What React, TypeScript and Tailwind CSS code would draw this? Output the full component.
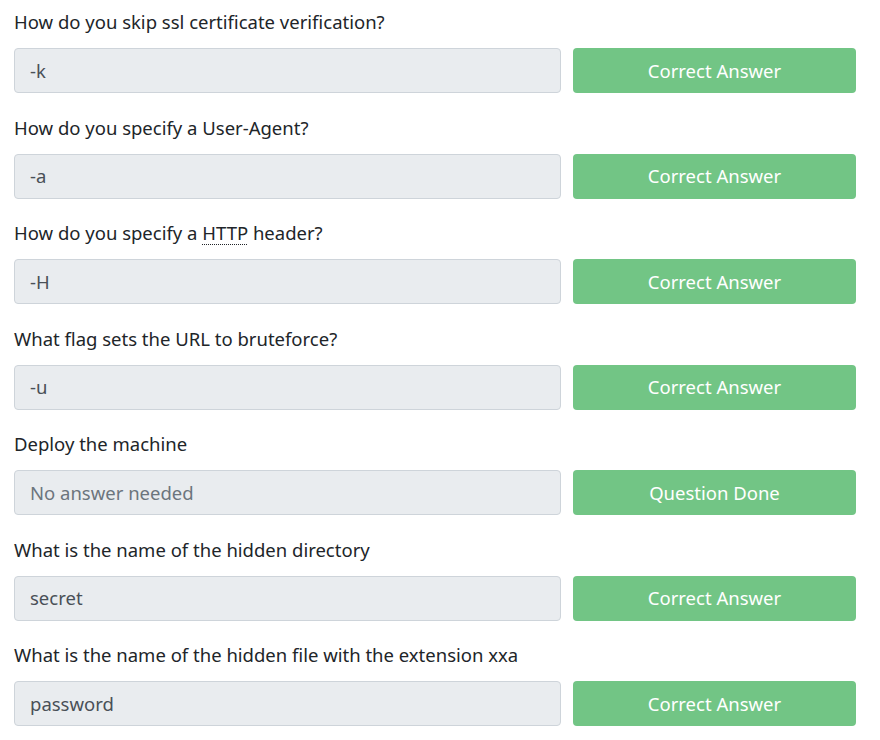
const questions: { q: React.ReactNode; a: string; done?: boolean }[] = [
  { q: "How do you skip ssl certificate verification?", a: "-k" },
  { q: "How do you specify a User-Agent?", a: "-a" },
  {
    q: (
      <>
        How do you specify a{" "}
        <abbr className="underline decoration-dotted decoration-1 underline-offset-[4px]">HTTP</abbr>{" "}
        header?
      </>
    ),
    a: "-H",
  },
  { q: "What flag sets the URL to bruteforce?", a: "-u" },
  { q: "Deploy the machine", a: "No answer needed", done: true },
  { q: "What is the name of the hidden directory", a: "secret" },
  { q: "What is the name of the hidden file with the extension xxa", a: "password" },
];

export default function App() {
  return (
    <div
      className="min-h-screen bg-white pt-[11px] pl-[14px] pr-[24px] text-[18.5px] text-[#212529]"
      style={{ fontFamily: '"Noto Sans", "Open Sans", sans-serif' }}
    >
      {questions.map((item, i) => (
        <div key={i} className="mb-[23.5px]">
          <div className="mb-[13px] h-6 leading-[22px]">{item.q}</div>
          <div className="flex gap-3">
            <div
              className={`flex h-[45px] flex-1 items-center rounded border border-[#ced4da] bg-[#e9ecef] px-[15px] ${
                item.done ? "text-[#6c757d]" : "text-[#495057]"
              }`}
            >
              {item.a}
            </div>
            <button className="h-[45px] w-[283px] rounded bg-[#72c585] text-center text-white">
              {item.done ? "Question Done" : "Correct Answer"}
            </button>
          </div>
        </div>
      ))}
    </div>
  );
}
